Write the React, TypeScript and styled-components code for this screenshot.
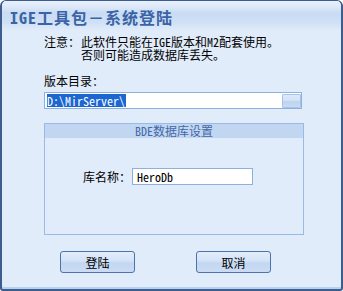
import styled, { createGlobalStyle } from 'styled-components';

const GlobalStyle = createGlobalStyle`
  html, body {
    margin: 0;
    padding: 0;
    background: #ffffff;
  }
  body {
    font-family: "Noto Sans Mono CJK SC", "Noto Sans CJK SC", "Liberation Mono", monospace;
    font-size: 12px;
    color: #000;
  }
`;

const Window = styled.div`
  width: 343px;
  height: 291px;
  box-sizing: border-box;
  border: 2px solid #3d5d8f;
  border-top-width: 1px;
  border-radius: 6px 6px 3px 3px;
  background: #e1ecfa;
  box-shadow: inset 0 -2px 0 #b9d0ef;
  display: flex;
  flex-direction: column;
  overflow: hidden;
`;

const TitleBar = styled.div`
  height: 30px;
  flex: none;
  display: flex;
  align-items: center;
  padding: 2px 0 0 8px;
  box-sizing: border-box;
  background: linear-gradient(
    to bottom,
    #e8f0fb 0%,
    #dde8f8 20%,
    #c8dcf4 40%,
    #cfe0f5 70%,
    #e1ecfa 100%
  );
`;

const Title = styled.span`
  font-size: 16px;
  letter-spacing: 1px;
  color: #3a64a6;
  font-weight: bold;
`;

const Body = styled.div`
  display: flex;
  flex-direction: column;
  padding: 4px 0 0 42px;
`;

const Notice = styled.div`
  display: flex;
  line-height: 13px;
`;

const NoticeLabel = styled.span`
  width: 37px;
  flex: none;
`;

const Label = styled.div`
  margin-top: 14px;
  line-height: 12px;
`;

const PathBox = styled.div`
  margin-top: 5px;
  width: 258px;
  height: 17px;
  box-sizing: border-box;
  border: 1px solid #8db0e1;
  background: #fff;
  display: flex;
  align-items: center;
  padding: 0 0 0 2px;
`;

const Selected = styled.span`
  background: #1b66d1;
  color: #fff;
  line-height: 13px;
  height: 13px;
  padding-right: 1px;
`;

const Spacer = styled.div`
  flex: 1;
`;

const BrowseButton = styled.div`
  width: 19px;
  height: 14px;
  box-sizing: border-box;
  border: 1px solid #a7c2e8;
  border-radius: 1px;
  background: linear-gradient(to bottom, #dde9f8 0%, #d2e2f6 45%, #bed3ef 55%, #c9dbf3 100%);
`;

const Group = styled.div`
  margin-top: 14px;
  width: 260px;
  height: 112px;
  box-sizing: border-box;
  border: 1px solid #9ab9e4;
  border-top: none;
  display: flex;
  flex-direction: column;
`;

const GroupHeader = styled.div`
  height: 15px;
  background: #c1d7f1;
  border-top: 1px solid #9ab9e4;
  box-sizing: border-box;
  color: #4468a8;
  text-align: center;
  line-height: 14px;
`;

const FieldRow = styled.div`
  margin-top: 30px;
  display: flex;
  align-items: center;
  padding-left: 38px;
`;

const FieldLabel = styled.span`
  width: 49px;
  flex: none;
`;

const TextInput = styled.div`
  width: 121px;
  height: 17px;
  box-sizing: border-box;
  border: 1px solid #8db0e1;
  background: #fff;
  line-height: 15px;
  padding-left: 4px;
`;

const Buttons = styled.div`
  margin-top: 16px;
  display: flex;
  gap: 61px;
  padding-left: 16px;
`;

const Button = styled.div`
  width: 75px;
  height: 22px;
  box-sizing: border-box;
  border: 1px solid #4e72aa;
  border-radius: 3px;
  background: linear-gradient(to bottom, #e3edfa 0%, #d3e3f7 45%, #c3d7f1 55%, #cbdcf3 100%);
  display: flex;
  align-items: center;
  justify-content: center;
  font-size: 12px;
`;

export default function App() {
  return (
    <>
      <GlobalStyle />
      <Window>
        <TitleBar>
          <Title>IGE工具包－系统登陆</Title>
        </TitleBar>
        <Body>
          <Notice>
            <NoticeLabel>注意：</NoticeLabel>
            <div>
              此软件只能在IGE版本和M2配套使用。
              <br />
              否则可能造成数据库丢失。
            </div>
          </Notice>
          <Label>版本目录：</Label>
          <PathBox>
            <Selected>D:\MirServer\</Selected>
            <Spacer />
            <BrowseButton />
          </PathBox>
          <Group>
            <GroupHeader>BDE数据库设置</GroupHeader>
            <FieldRow>
              <FieldLabel>库名称：</FieldLabel>
              <TextInput>HeroDb</TextInput>
            </FieldRow>
          </Group>
          <Buttons>
            <Button>登陆</Button>
            <Button>取消</Button>
          </Buttons>
        </Body>
      </Window>
    </>
  );
}
